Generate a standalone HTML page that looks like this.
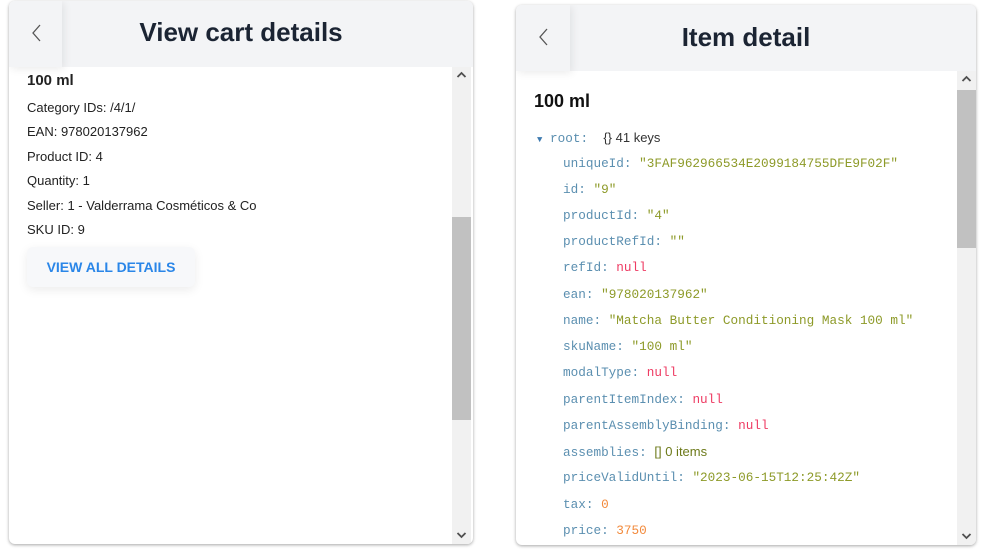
<!DOCTYPE html>
<html><head><meta charset="utf-8"><style>
*{margin:0;padding:0;box-sizing:border-box}
body{width:985px;height:551px;background:#fff;position:relative;overflow:hidden;font-family:"Liberation Sans",sans-serif}
.panel{position:absolute;background:#fff;border-radius:6px;box-shadow:0 1px 3px rgba(0,0,0,.35);overflow:hidden}
.hdr{position:absolute;left:0;top:0;right:0;background:#f3f4f6}
.back{position:absolute;left:0;top:0;background:#f3f4f6;box-shadow:2px 2px 8px rgba(0,0,0,.08)}
.title{position:absolute;left:0;right:0;text-align:center;font-weight:bold;font-size:26px;color:#1b2433}
.sb{position:absolute;background:#f1f1f1;width:19px}
.thumb{position:absolute;left:0;width:19px;background:#c1c1c1}
.arr{position:absolute;left:4px}
.l{position:absolute;left:27px;font-size:13px;color:#222}
.j{position:absolute;left:563px;font-family:"Liberation Mono",monospace;font-size:12.7px;color:#5b8fb0;white-space:pre}
.s{color:#8d9a28}.n{color:#ee3b63}.o{color:#f28a3c}.t{font-family:"Liberation Sans",sans-serif;color:#6d7a1a;font-size:13px}
</style></head><body>
<div class="panel" style="left:9px;top:1px;width:464px;height:543px">
 <div class="hdr" style="height:66px"></div>
 <div class="back" style="width:53px;height:66px"><svg width="53" height="66"><path d="M31 24 L24 32 L31 40" fill="none" stroke="#555" stroke-width="1.3"/></svg></div>
 <div class="title" style="top:16px">View cart details</div>
 <div class="sb" style="left:443px;top:66px;height:477px">
  <div class="thumb" style="top:150px;height:203px"></div>
  <svg class="arr" style="top:4px" width="11" height="8"><path d="M1.5 6 L5.5 2 L9.5 6" fill="none" stroke="#505050" stroke-width="1.8"/></svg>
  <svg class="arr" style="bottom:5px" width="11" height="8"><path d="M1.5 2 L5.5 6 L9.5 2" fill="none" stroke="#505050" stroke-width="1.8"/></svg>
 </div>
</div>
<div class="l" style="top:72px;font-weight:bold;font-size:15px">100 ml</div>
<div class="l" style="top:100px">Category IDs: /4/1/</div>
<div class="l" style="top:124px">EAN: 978020137962</div>
<div class="l" style="top:149px">Product ID: 4</div>
<div class="l" style="top:173px">Quantity: 1</div>
<div class="l" style="top:198px">Seller: 1 - Valderrama Cosméticos &amp; Co</div>
<div class="l" style="top:222px">SKU ID: 9</div>
<div style="position:absolute;left:27px;top:247px;width:168px;height:40px;background:#f7f8fa;border-radius:6px;box-shadow:0 3px 10px rgba(0,0,0,.08);color:#2a86e8;font-weight:bold;font-size:14px;text-align:center;line-height:40px">VIEW ALL DETAILS</div>

<div class="panel" style="left:516px;top:5px;width:460px;height:540px">
 <div class="hdr" style="height:66px"></div>
 <div class="back" style="width:54px;height:66px"><svg width="54" height="66"><path d="M31 24 L24 32 L31 40" fill="none" stroke="#555" stroke-width="1.3"/></svg></div>
 <div class="title" style="top:17px">Item detail</div>
 <div class="sb" style="left:441px;top:66px;height:474px">
  <div class="thumb" style="top:19px;height:158px"></div>
  <svg class="arr" style="top:4px" width="11" height="8"><path d="M1.5 6 L5.5 2 L9.5 6" fill="none" stroke="#505050" stroke-width="1.8"/></svg>
  <svg class="arr" style="bottom:5px" width="11" height="8"><path d="M1.5 2 L5.5 6 L9.5 2" fill="none" stroke="#505050" stroke-width="1.8"/></svg>
 </div>
</div>
<div style="position:absolute;left:534px;top:91px;font-weight:bold;font-size:18px;color:#111">100 ml</div>
<div class="j" style="left:537px;top:130px"><span style="font-size:9px;color:#3d7ab0">&#9660;</span> root:  <span class="t" style="color:#333">{} 41 keys</span></div>
<div class="j" style="top:156px">uniqueId: <span class="s">"3FAF962966534E2099184755DFE9F02F"</span></div>
<div class="j" style="top:182px">id: <span class="s">"9"</span></div>
<div class="j" style="top:208px">productId: <span class="s">"4"</span></div>
<div class="j" style="top:234px">productRefId: <span class="s">""</span></div>
<div class="j" style="top:260px">refId: <span class="n">null</span></div>
<div class="j" style="top:287px">ean: <span class="s">"978020137962"</span></div>
<div class="j" style="top:313px">name: <span class="s">"Matcha Butter Conditioning Mask 100 ml"</span></div>
<div class="j" style="top:339px">skuName: <span class="s">"100 ml"</span></div>
<div class="j" style="top:365px">modalType: <span class="n">null</span></div>
<div class="j" style="top:392px">parentItemIndex: <span class="n">null</span></div>
<div class="j" style="top:418px">parentAssemblyBinding: <span class="n">null</span></div>
<div class="j" style="top:444px">assemblies: <span class="t">[] 0 items</span></div>
<div class="j" style="top:470px">priceValidUntil: <span class="s">"2023-06-15T12:25:42Z"</span></div>
<div class="j" style="top:497px">tax: <span class="o">0</span></div>
<div class="j" style="top:523px">price: <span class="o">3750</span></div>
</body></html>
